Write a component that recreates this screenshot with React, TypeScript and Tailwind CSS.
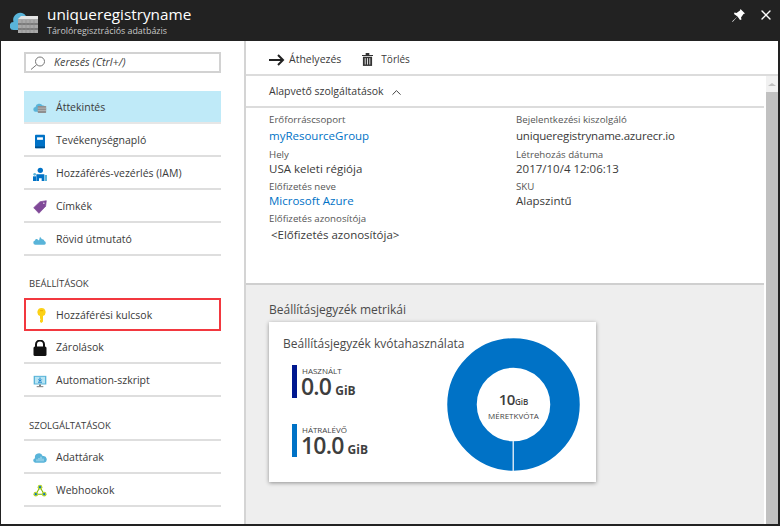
import type { ReactNode } from "react"
import { ChevronUp, X } from "lucide-react"

const font = "font-['Open_Sans','Liberation_Sans',sans-serif]"

function CloudIcon() {
  return (
    <svg width="14" height="11" viewBox="0 0 21 17">
      <path d="M4 15a3.600 3.600 0 0 1-.5-7.200A6 6 0 0 1 14.500 5.500 4.800 4.800 0 0 1 16 15z" fill="#59b4d9" />
      <rect x="7" y="6" width="13" height="11" rx="1" fill="#8f8f8f" />
      <path d="M7 9.500h13M7 13h13" stroke="#c9c9c9" strokeWidth="1" />
    </svg>
  )
}

function BookIcon() {
  return (
    <svg width="12" height="15" viewBox="0 0 14 18">
      <rect x="1" y="1" width="12" height="16" rx="1" fill="#0072c6" />
      <rect x="3.500" y="4" width="7" height="3" fill="#fff" />
      <rect x="1" y="15" width="12" height="2" fill="#004f8b" />
    </svg>
  )
}

function PeopleIcon() {
  return (
    <svg width="14" height="14" viewBox="0 0 21 21">
      <circle cx="11" cy="5" r="4" fill="#0072c6" />
      <path d="M5 21V11h12v10h-4v-4H9v4z" fill="#0072c6" />
      <circle cx="2.500" cy="11" r="2" fill="#59b4d9" />
      <rect x="0" y="14" width="4.500" height="7" fill="#0072c6" />
      <rect x="17.500" y="12" width="3.500" height="9" fill="#59b4d9" />
    </svg>
  )
}

function TagIcon() {
  return (
    <svg width="14" height="14" viewBox="0 0 20 20">
      <path d="M1 11 10 2.500 19 1 18 9 8.500 19z" fill="#804998" strokeLinejoin="round" stroke="#804998" />
      <circle cx="15.500" cy="4.500" r="1" fill="#fff" />
    </svg>
  )
}

function QuickIcon() {
  return (
    <svg width="14" height="9" viewBox="0 0 21 13">
      <path d="M3.500 13a3.300 3.300 0 0 1-.5-6.500C3.500 4.500 5 4 6.500 4.500L9 6.500 10.500 1l3 3.500c2 0 3.300 1 3.500 2.700A3 3 0 0 1 17 13z" fill="#59b4d9" />
    </svg>
  )
}

function KeyIcon() {
  return (
    <svg width="9" height="15" viewBox="0 0 12 20">
      <path d="M6 0a5.500 5.500 0 0 1 2 10.600V18l-2 2-2-1.500V16l1-1-1-1v-3.400A5.500 5.500 0 0 1 6 0z" fill="#fcd116" />
      <rect x="4" y="3" width="4" height="1.200" fill="#e8a800" />
    </svg>
  )
}

function LockIcon() {
  return (
    <svg width="14" height="16" viewBox="0 0 14 16">
      <path d="M3 7V4.500a4 4 0 0 1 8 0V7" fill="none" stroke="#111" strokeWidth="2" />
      <rect x="0.500" y="6.500" width="13" height="9.500" rx="1.500" fill="#111" />
    </svg>
  )
}

function MonitorIcon() {
  return (
    <svg width="14" height="13" viewBox="0 0 21 18">
      <rect x="1" y="0.500" width="19" height="13" fill="#59b4d9" />
      <rect x="3" y="2" width="15" height="10" fill="#b8e4f2" />
      <path d="M10.500 3v5M8 6l2.500 2.500L13 6M7.500 10h6" stroke="#0072c6" strokeWidth="1.300" fill="none" />
      <rect x="9" y="13.500" width="3" height="2.500" fill="#7a7a7a" />
      <rect x="5.500" y="16" width="10" height="1.500" fill="#7a7a7a" />
    </svg>
  )
}

function RepoIcon() {
  return (
    <svg width="14" height="10" viewBox="0 0 21 14">
      <path d="M3.500 14a3.400 3.400 0 0 1-.5-6.700A6 6 0 0 1 14.500 4 4.800 4.800 0 0 1 16.500 14z" fill="#59b4d9" />
      <path d="M6 9v3M9 7v5M12 5v7M15 8v4" stroke="#d5eff8" strokeWidth="1.200" />
    </svg>
  )
}

function WebhookIcon() {
  return (
    <svg width="14" height="14" viewBox="0 0 20 19">
      <path d="M10 4 4 14h12z" fill="none" stroke="#7fba00" strokeWidth="1.500" />
      <circle cx="10" cy="4" r="3.400" fill="#b8d432" />
      <circle cx="4" cy="14" r="3.400" fill="#b8d432" />
      <circle cx="16" cy="14" r="3.400" fill="#b8d432" />
      <circle cx="10" cy="4" r="1.500" fill="#0072c6" />
      <circle cx="4" cy="14" r="1.500" fill="#0072c6" />
      <circle cx="16" cy="14" r="1.500" fill="#0072c6" />
    </svg>
  )
}

function TrashIcon() {
  return (
    <svg width="11" height="13" viewBox="0 0 12 14">
      <path d="M0 2h12v1.300H0zM4 0h4v2H4z" fill="#333" />
      <path d="M1 4h10v10H1z" fill="#333" />
      <path d="M3.500 5.500v7M6 5.500v7M8.500 5.500v7" stroke="#fff" strokeWidth="0.900" />
    </svg>
  )
}

function CloudHeader() {
  return (
    <svg width="28" height="24" viewBox="0 0 28 24" className="mt-[11px] shrink-0">
      <path d="M4 19a4 4 0 0 1-.5-8A7 7 0 0 1 16 5a6 6 0 0 1 6 5v9z" fill="#59b4d9" />
      <path d="M8 8h20v14H8z" fill="#a8a8a8" />
      <path d="M8 8l3-3h17v3z" fill="#e4e4e4" />
      <path d="M8 13h20M8 18h20" stroke="#6e6e6e" strokeWidth="1.500" />
      <path d="M12 9v13M16 9v13M20 9v13M24 9v13" stroke="#8e8e8e" strokeWidth="0.700" />
    </svg>
  )
}

function NavRow({ icon, label, active = false, marked = false }: { icon: ReactNode; label: string; active?: boolean; marked?: boolean }) {
  return (
    <div
      className={`flex h-[33px] items-center ${
        marked
          ? "border-2 border-[#f2383f] pt-[2px]"
          : active
            ? "border-b-2 border-[#e6e6e6] bg-[#bfeaf8] pt-[2px]"
            : "border-b-2 border-[#dedede] pt-[3px]"
      }`}
    >
      <span className={`flex shrink-0 justify-center ${marked ? "w-[30px]" : "w-[32px]"}`}>{icon}</span>
      <span className="text-[10.500px] text-[#3a3a3a]">{label}</span>
    </div>
  )
}

function Field({ label, value, link = false, tight = false, indent = false, first = false, narrow = false }: {
  label: string
  value: string
  link?: boolean
  tight?: boolean
  indent?: boolean
  first?: boolean
  narrow?: boolean
}) {
  return (
    <div className={first ? "h-[35px]" : "h-[32px]"}>
      <div className="text-[9.700px] leading-[14px] text-[#555]">{label}</div>
      <div
        className={`text-[11.500px] ${tight ? "leading-[14px]" : "leading-[18px]"} ${link ? "text-[#0072c6]" : "text-[#3a3a3a]"} ${
          indent ? "pl-[2px]" : ""
        } ${narrow ? "tracking-[-0.2px]" : ""}`}
      >
        {value}
      </div>
    </div>
  )
}

function Metric({ label, value, color }: { label: string; value: string; color: string }) {
  return (
    <div className="flex h-[33px] gap-[5px]">
      <div className={`w-[5px] ${color}`} />
      <div>
        <div className="text-[8px] leading-[11px] text-[#444]">{label}</div>
        <div className="flex items-baseline gap-[4px] text-[#3e3e3e]">
          <span className="-ml-px text-[23px] leading-[20px] font-semibold tracking-[-0.8px]">{value}</span>
          <span className="text-[12px] leading-[20px] font-bold">GiB</span>
        </div>
      </div>
    </div>
  )
}

export default function App() {
  return (
    <div className={`flex h-[526px] w-[780px] flex-col overflow-hidden border-r-2 border-b-2 border-l border-[#222] bg-white ${font}`}>
      <header className="flex h-[41px] shrink-0 items-start bg-[#222] pr-[4px] pl-[9px] text-white">
        <CloudHeader />
        <div className="ml-[9px] flex-1 pt-[5px]">
          <div className="text-[15.300px] leading-[19px]">uniqueregistryname</div>
          <div className="mt-[1px] text-[8.900px] leading-[12px] text-[#c8c8c8]">Tárolóregisztrációs adatbázis</div>
        </div>
        <svg width="13" height="13" viewBox="0 0 13 13" className="mt-[9px] mr-[13px]">
          <path d="M8.500 0 13 4.500 11.500 5 9 8.500 9.500 10.500 8 11 5.500 7.500 1 12.500 0 13 .5 12 5.500 7.500 2 5l.5-1.500 2 .5L8 1.500z" fill="#fff" />
        </svg>
        <X size={16} strokeWidth={2} className="mt-[7px]" />
      </header>

      <div className="flex min-h-0 flex-1">
        <aside className="w-[245px] shrink-0 border-r-2 border-[#d4d4d4] pt-[11px] pr-[23px] pl-[23px]">
          <div className="flex h-[21px] items-center border-2 border-[#d2d2d2] pl-[4px]">
            <svg width="16" height="14" viewBox="0 0 16 14">
              <circle cx="10" cy="5.500" r="4.500" fill="none" stroke="#777" strokeWidth="1" />
              <path d="M6.700 8.700 1 13.500" stroke="#777" strokeWidth="1" />
            </svg>
            <span className="ml-[8px] text-[10.800px] italic text-[#444]">Keresés (Ctrl+/)</span>
          </div>

          <div className="mt-[18px]">
            <NavRow active icon={<CloudIcon />} label="Áttekintés" />
            <NavRow icon={<BookIcon />} label="Tevékenységnapló" />
            <NavRow icon={<PeopleIcon />} label="Hozzáférés-vezérlés (IAM)" />
            <NavRow icon={<TagIcon />} label="Címkék" />
            <NavRow icon={<QuickIcon />} label="Rövid útmutató" />
          </div>

          <div className="flex h-[42px] items-end pb-[7px] pl-[5px] text-[9.500px] text-[#3a3a3a]">BEÁLLÍTÁSOK</div>
          <NavRow marked icon={<KeyIcon />} label="Hozzáférési kulcsok" />
          <NavRow icon={<LockIcon />} label="Zárolások" />
          <NavRow icon={<MonitorIcon />} label="Automation-szkript" />

          <div className="flex h-[42px] items-end pb-[6px] pl-[5px] text-[9.500px] text-[#3a3a3a]">SZOLGÁLTATÁSOK</div>
          <div className="border-t-2 border-[#dedede]">
            <NavRow icon={<RepoIcon />} label="Adattárak" />
            <NavRow icon={<WebhookIcon />} label="Webhookok" />
          </div>
        </aside>

        <main className="flex min-w-0 flex-1 flex-col">
          <div className="flex h-[35px] shrink-0 items-center border-b-2 border-[#dcdcdc] pt-[4px] pl-[23px]">
            <svg width="16" height="12" viewBox="0 0 16 12">
              <path d="M0 6h14M9 1l5 5-5 5" fill="none" stroke="#222" strokeWidth="2" />
            </svg>
            <span className="ml-[4px] text-[10.500px] text-[#3a3a3a]">Áthelyezés</span>
            <span className="ml-[21px] flex"><TrashIcon /></span>
            <span className="ml-[8px] text-[10px] text-[#3a3a3a]">Törlés</span>
          </div>

          <div className="flex min-h-0 flex-1">
            <div className="flex min-w-0 flex-1 flex-col">
              <div className="flex h-[32px] shrink-0 items-center border-b-2 border-[#dcdcdc] pt-[2px] pl-[23px]">
                <span className="text-[10.500px] text-[#3a3a3a]">Alapvető szolgáltatások</span>
                <ChevronUp size={15} strokeWidth={1.5} className="ml-[5px] text-[#333]" />
              </div>

              <div className="grid h-[177px] shrink-0 grid-cols-[247px_1fr] border-b-2 border-[#cfcfcf] pt-[5px] pl-[23px]">
                <div>
                  <Field first label="Erőforráscsoport" value="myResourceGroup" link />
                  <Field tight label="Hely" value="USA keleti régiója" />
                  <Field tight label="Előfizetés neve" value="Microsoft Azure" link />
                  <Field label="Előfizetés azonosítója" value="<Előfizetés azonosítója>" indent />
                </div>
                <div>
                  <Field first narrow label="Bejelentkezési kiszolgáló" value="uniqueregistryname.azurecr.io" />
                  <Field tight label="Létrehozás dátuma" value="2017/10/4 12:06:13" />
                  <Field tight label="SKU" value="Alapszintű" />
                </div>
              </div>

              <div className="min-h-0 flex-1 bg-[#eeeeee] pt-[16px] pl-[23px]">
                <div className="text-[12px] leading-[17px] text-[#4a4a4a]">Beállításjegyzék metrikái</div>
                <div className="mt-[4px] flex h-[160px] w-[327px] bg-white pt-[13px] pl-[14px] shadow-[0_1px_4px_rgba(0,0,0,0.4)]">
                  <div className="w-[164px] shrink-0">
                    <div className="text-[12px] leading-[18px] whitespace-nowrap text-[#4a4a4a]">Beállításjegyzék kvótahasználata</div>
                    <div className="mt-[12px] ml-[9px]">
                      <Metric label="HASZNÁLT" value="0.0" color="bg-[#00188f]" />
                      <div className="h-[26px]" />
                      <Metric label="HÁTRALÉVŐ" value="10.0" color="bg-[#0072c6]" />
                    </div>
                  </div>
                  <div className="relative mt-[3px] h-[133px] w-[133px]">
                    <svg width="133" height="133" viewBox="0 0 133 133">
                      <circle cx="66.500" cy="66.500" r="51.500" fill="none" stroke="#0072c6" strokeWidth="29.500" />
                      <rect x="65.500" y="103" width="1.500" height="30" fill="#cfe3f3" />
                    </svg>
                    <div className="absolute inset-0 flex flex-col items-center justify-center pt-[3px] text-[#3e3e3e]">
                      <div className="flex items-baseline font-semibold">
                        <span className="text-[15px] leading-[16px] tracking-[-0.5px]">10</span>
                        <span className="text-[8px] leading-[16px]">GiB</span>
                      </div>
                      <div className="text-[8px] leading-[11px] text-[#444]">MÉRETKVÓTA</div>
                    </div>
                  </div>
                </div>
              </div>
            </div>

            <div className="flex w-[14px] shrink-0 flex-col items-center bg-white pl-[2px]">
              <div className="flex h-[16px] w-full items-center justify-center bg-[#f1f1f1]">
                <div className="h-0 w-0 border-x-[4px] border-b-[3px] border-x-transparent border-b-[#c0c0c0]" />
              </div>
              <div className="w-full flex-1 bg-[#c1c1c1]" />
            </div>
          </div>
        </main>
      </div>
    </div>
  )
}
